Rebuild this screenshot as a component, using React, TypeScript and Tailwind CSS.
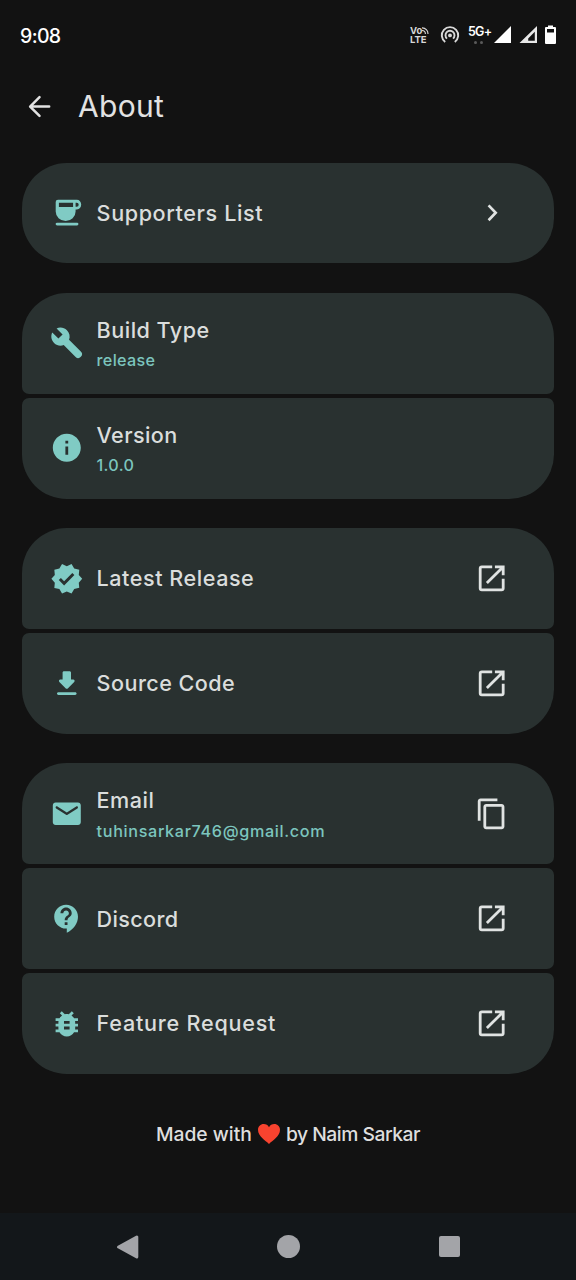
import type { ReactNode } from "react";

const icons = {
  build:
    "M22 18.3L13.6 9.9c.9-2.3.4-5-1.5-6.9-2-2-5-2.4-7.4-1.3L9 6 6 9 1.6 4.7C.4 7.1.9 10.1 2.9 12.1c1.9 1.9 4.6 2.4 6.9 1.5l8.5 8.5a2.6 2.6 0 0 0 3.7-3.8z",
  info: "M12 2C6.48 2 2 6.48 2 12s4.48 10 10 10 10-4.48 10-10S17.52 2 12 2zm1 15h-2v-6h2v6zm0-8h-2V7h2v2z",
  verified:
    "M23 12l-2.44-2.79.34-3.69-3.61-.82-1.89-3.2L12 2.96 8.6 1.5 6.71 4.69 3.1 5.5l.34 3.7L1 12l2.44 2.79-.34 3.7 3.61.82L8.6 22.5l3.4-1.47 3.4 1.46 1.89-3.19 3.61-.82-.34-3.69L23 12zm-12.91 4.72l-3.8-3.81 1.48-1.48 2.32 2.33 5.85-5.87 1.48 1.48-7.33 7.35z",
  download:
    "M16.59 9H15V4c0-.55-.45-1-1-1h-4c-.55 0-1 .45-1 1v5H7.41c-.89 0-1.34 1.08-.71 1.71l4.59 4.59c.39.39 1.02.39 1.41 0l4.59-4.59c.63-.63.19-1.71-.7-1.71zM5 19c0 .55.45 1 1 1h12c.55 0 1-.45 1-1s-.45-1-1-1H6c-.55 0-1 .45-1 1z",
  mail: "M20 4H4c-1.1 0-1.99.9-1.99 2L2 18c0 1.1.9 2 2 2h16c1.1 0 2-.9 2-2V6c0-1.1-.9-2-2-2zm-.4 4.25l-7.07 4.42c-.32.2-.74.2-1.06 0L4.4 8.25c-.25-.16-.4-.43-.4-.72 0-.67.73-1.07 1.3-.72L12 11l6.7-4.19c.57-.35 1.3.05 1.3.72 0 .29-.15.56-.4.72z",
  support:
    "M11.5 2C6.81 2 3 5.81 3 10.5S6.81 19 11.5 19h.5v3c4.86-2.34 8-7 8-11.5C20 5.81 16.19 2 11.5 2zm1 14.5h-2v-2h2v2zm0-3.5h-2c0-3.25 3-3 3-5 0-1.1-.9-2-2-2s-2 .9-2 2h-2c0-2.21 1.79-4 4-4s4 1.79 4 4c0 2.5-3 2.75-3 5z",
  bug: "M20 8h-2.81c-.45-.78-1.07-1.45-1.82-1.96L17 4.41 15.59 3l-2.17 2.17C12.96 5.06 12.49 5 12 5c-.49 0-.96.06-1.41.17L8.41 3 7 4.41l1.62 1.63C7.88 6.55 7.26 7.22 6.81 8H4v2h2.09c-.05.33-.09.66-.09 1v1H4v2h2v1c0 .34.04.67.09 1H4v2h2.81c1.04 1.79 2.97 3 5.19 3s4.15-1.21 5.19-3H20v-2h-2.09c.05-.33.09-.66.09-1v-1h2v-2h-2v-1c0-.34-.04-.67-.09-1H20V8zm-6 8h-4v-2h4v2zm0-4h-4v-2h4v2z",
  copy: "M16 1H4c-1.1 0-2 .9-2 2v14h2V3h12V1zm3 4H8c-1.1 0-2 .9-2 2v14c0 1.1.9 2 2 2h11c1.1 0 2-.9 2-2V7c0-1.1-.9-2-2-2zm0 16H8V7h11v14z",
};

function Glyph({ name }: { name: keyof typeof icons }) {
  return (
    <svg viewBox="0 0 24 24" className="size-[33.6px]" fill="currentColor">
      <path d={icons[name]} />
    </svg>
  );
}

function Cup() {
  return (
    <svg viewBox="0 0 33.6 33.6" className="size-[33.6px]">
      <g transform="translate(0.7 0)">
        <path
          fill="currentColor"
          fillRule="evenodd"
          d="M7.3 3.8H26.1C28.8 3.8 30.5 5.9 30.5 8.6S28.8 13.4 26.1 13.4H24.9V15.6A9.95 9.5 0 0 1 5 15.6V6.1A2.3 2.3 0 0 1 7.3 3.8ZM8.2 6.7V10.9H22.4V6.7ZM24.9 6.7V10.7H26A2 2 0 0 0 26 6.7Z"
        />
        <path d="M6.4 28.1H26.3" stroke="currentColor" strokeWidth="2.9" strokeLinecap="round" />
      </g>
    </svg>
  );
}

function External() {
  return (
    <svg viewBox="0 0 33.6 33.6" className="size-[33.6px]" fill="none" stroke="currentColor" strokeWidth="2.8">
      <path d="M17.2 4.9H6.8A1.6 1.6 0 0 0 5.2 6.5V26.3A1.6 1.6 0 0 0 6.8 27.9H26.6A1.6 1.6 0 0 0 28.2 26.3V16.8" />
      <path d="M19.9 4.9H28.2V13.3M27.8 5.3L11.9 21" />
    </svg>
  );
}

function Chevron() {
  return (
    <svg viewBox="0 0 24 24" className="size-[33.6px]" fill="none" stroke="currentColor" strokeWidth="1.9">
      <path d="M9.7 6.7L14.8 12L9.7 17.3" />
    </svg>
  );
}

type RowProps = {
  icon: ReactNode;
  title: string;
  titleClass: string;
  sub?: string;
  subClass?: string;
  action?: ReactNode;
  first?: boolean;
  last?: boolean;
};

function Row({ icon, title, titleClass, sub, subClass = "", action, first, last }: RowProps) {
  const top = first ? "rounded-t-[44.8px]" : "rounded-t-[7px]";
  const bottom = last ? "rounded-b-[44.8px]" : "rounded-b-[7px]";
  return (
    <div className={`flex h-[100.8px] items-center bg-[#293130] pr-[44.8px] pl-[28px] ${top} ${bottom}`}>
      <span className="shrink-0 text-[#80cbc4]">{icon}</span>
      <div className="ml-[12.6px] flex grow flex-col pt-px">
        <span className={`text-[21.6px] leading-[31px] font-[450] whitespace-nowrap text-[#dadddc] ${titleClass}`}>
          {title}
        </span>
        {sub && (
          <span className={`mt-[2.5px] text-[16.2px] leading-[24px] font-[450] whitespace-nowrap text-[#7cc5be] ${subClass}`}>
            {sub}
          </span>
        )}
      </div>
      <span className="shrink-0 text-[#e0e3e2]">{action}</span>
    </div>
  );
}

function Group({ children }: { children: ReactNode }) {
  return <section className="flex flex-col gap-[4.2px]">{children}</section>;
}

function StatusBar() {
  return (
    <div className="flex h-[71px] items-center pr-[20px] pl-[20px] text-white">
      <span className="grow pt-[2px] text-[19.5px] font-medium tracking-[-0.65px]">9:08</span>
      <div className="flex items-center pb-px">
        <div className="flex w-[20px] flex-col text-[9.5px] leading-[9px] font-bold text-[#d8d8d8]">
          <span className="flex">
            Vo
            <svg viewBox="0 0 8 8" className="mt-[1px] size-[7px]" fill="none" stroke="currentColor" strokeWidth="1.3">
              <path d="M0 1A6.5 6.5 0 0 1 6.8 8M0 4A3.5 3.5 0 0 1 3.8 8" />
            </svg>
          </span>
          <span>LTE</span>
        </div>
        <svg viewBox="0 0 20 20" className="ml-[10px] size-[20px]" fill="none" stroke="#d8d8d8" strokeWidth="1.9">
          <path d="M5.2 17A8.2 8.2 0 1 1 14.8 17M7 13.6A4.5 4.5 0 1 1 13 13.6" />
          <circle cx="10" cy="10.4" r="1.9" fill="#d8d8d8" stroke="none" />
        </svg>
        <div className="ml-[8px] flex w-[26px] flex-col pb-[2px]">
          <span className="text-[12.5px] leading-[13px] font-semibold tracking-[-0.75px]">5G+</span>
          <span className="mt-[3px] flex gap-[3px] pl-[6px]">
            <i className="size-[3px] rounded-full bg-[#5a5a5a]" />
            <i className="size-[3px] rounded-full bg-[#5a5a5a]" />
          </span>
        </div>
        <svg viewBox="0 0 62 20" className="h-[20px] w-[62px]">
          <path d="M17 1V18H0Z" fill="#fff" />
          <path fillRule="evenodd" d="M43 1V18H25.5ZM40.8 6.8L34.2 13.4V15.8H40.8Z" fill="#e8e8e8" />
          <path
            fillRule="evenodd"
            d="M54 .5H59V2H61A1 1 0 0 1 62 3V18A1 1 0 0 1 61 19H52A1 1 0 0 1 51 18V3A1 1 0 0 1 52 2H54ZM53 4V7.5H60V4Z"
            fill="#fff"
          />
        </svg>
      </div>
    </div>
  );
}

export default function App() {
  return (
    <div className="flex h-[1280px] w-[576px] flex-col overflow-hidden bg-[#121212] font-['Inter','Liberation_Sans',sans-serif]">
      <StatusBar />
      <header className="flex h-[71px] items-center pl-[22.6px] text-[#e2e2e2]">
        <svg
          viewBox="0 0 24 24"
          className="size-[33.6px]"
          fill="none"
          stroke="currentColor"
          strokeWidth="1.8"
          strokeLinecap="round"
          strokeLinejoin="round"
        >
          <path d="M18.7 11.8H5.2M11.8 5.1L5.1 11.8L11.8 18.5" />
        </svg>
        <h1 className="ml-[21.8px] text-[30px] tracking-[0.3px]">About</h1>
      </header>

      <main className="flex grow flex-col gap-[29.4px] px-[22.4px] pt-[20.6px]">
        <Group>
          <Row icon={<Cup />} title="Supporters List" titleClass="tracking-[0.6px]" action={<Chevron />} first last />
        </Group>
        <Group>
          <Row icon={<Glyph name="build" />} title="Build Type" titleClass="tracking-[0.48px]" sub="release" subClass="tracking-[0.3px]" first />
          <Row icon={<Glyph name="info" />} title="Version" titleClass="tracking-[0.38px]" sub="1.0.0" subClass="tracking-[0.3px]" last />
        </Group>
        <Group>
          <Row icon={<Glyph name="verified" />} title="Latest Release" titleClass="tracking-[0.53px]" action={<External />} first />
          <Row icon={<Glyph name="download" />} title="Source Code" titleClass="tracking-[0.44px]" action={<External />} last />
        </Group>
        <Group>
          <Row
            icon={<Glyph name="mail" />}
            title="Email"
            titleClass="tracking-[0.52px]"
            sub="tuhinsarkar746@gmail.com"
            subClass="tracking-[0.66px]"
            action={<Glyph name="copy" />}
            first
          />
          <Row icon={<Glyph name="support" />} title="Discord" titleClass="tracking-[0.35px]" action={<External />} />
          <Row icon={<Glyph name="bug" />} title="Feature Request" titleClass="tracking-[0.76px]" action={<External />} last />
        </Group>
        <p className="mt-[17px] flex items-center justify-center text-[19.3px] leading-[28px] font-[450] whitespace-nowrap text-[#dedede]">
          <span>Made with</span>
          <svg viewBox="0 0 22 20" className="mx-[6px] h-[20px] w-[22px]">
            <path
              d="M11 20C7.5 16.5 0 12.5 0 5.8C0 2.5 2.5 0 5.7 0C8 0 10 1.2 11 3.2C12 1.2 14 0 16.3 0C19.5 0 22 2.5 22 5.8C22 12.5 14.5 16.5 11 20Z"
              fill="#f8432f"
            />
          </svg>
          <span className="tracking-[-0.47px]">by Naim Sarkar</span>
        </p>
      </main>

      <nav className="flex h-[67px] shrink-0 items-center justify-between bg-[#13171a] pr-[116px] pl-[116px]">
        <svg viewBox="0 0 24 24" className="size-[24px]">
          <path d="M20.8 2V22L2.6 12Z" fill="#a3a4a8" stroke="#a3a4a8" strokeWidth="3" strokeLinejoin="round" />
        </svg>
        <span className="mr-[1.5px] size-[23.5px] rounded-full bg-[#a3a4a8]" />
        <span className="size-[21.5px] rounded-[2px] bg-[#a3a4a8]" />
      </nav>
    </div>
  );
}
